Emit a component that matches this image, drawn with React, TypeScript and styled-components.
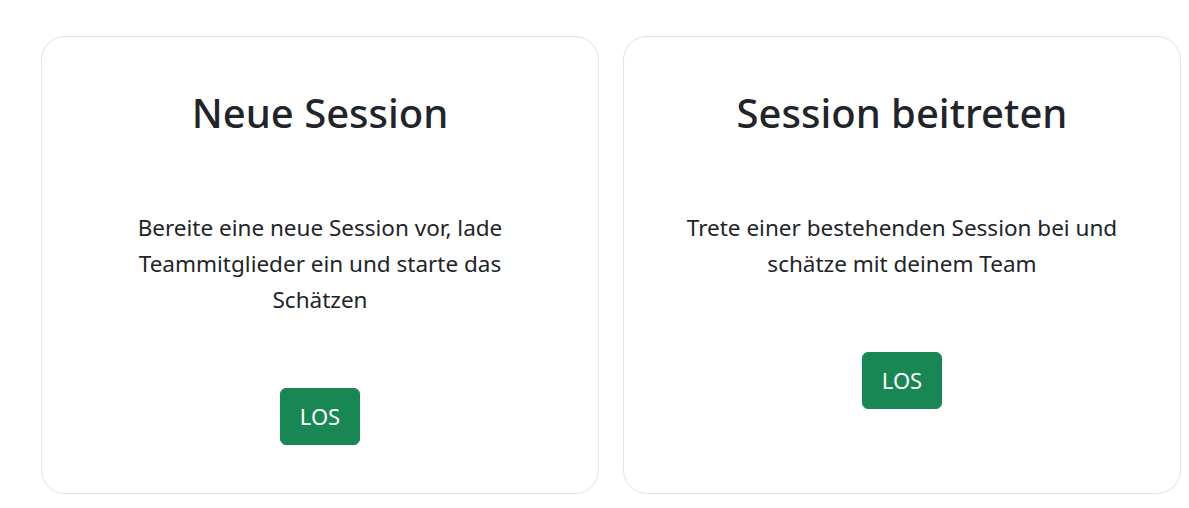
import styled, { createGlobalStyle } from 'styled-components';

const GlobalStyle = createGlobalStyle`
  body {
    margin: 0;
    background: #fff;
    color: #212529;
    font-family: "Noto Sans", "Open Sans", sans-serif;
  }
`;

const Page = styled.div`
  padding: 36px 8px 15px 41px;
`;

const Row = styled.div`
  display: grid;
  grid-template-columns: repeat(2, 558px);
  gap: 24px;
`;

const Card = styled.div`
  display: flex;
  flex-direction: column;
  align-items: center;
  text-align: center;
  padding: 52px 56px 48px;
  border: 1px solid #dee2e6;
  border-radius: 24px;
  background: #fff;
`;

const Title = styled.h1`
  margin: 0;
  font-size: 40px;
  font-weight: 500;
  line-height: 48px;
  color: #212529;
`;

const Text = styled.p`
  margin: 73px 0 0;
  font-size: 22.5px;
  line-height: 36px;
  color: #212529;
`;

const GoButton = styled.button`
  margin-top: 70px;
  padding: 11px 19px;
  font-family: inherit;
  font-size: 22px;
  line-height: 33px;
  color: #fff;
  background: #198754;
  border: 1px solid #198754;
  border-radius: 6px;
  cursor: pointer;
`;

const cards = [
  {
    title: 'Neue Session',
    text: 'Bereite eine neue Session vor, lade Teammitglieder ein und starte das Schätzen',
  },
  {
    title: 'Session beitreten',
    text: 'Trete einer bestehenden Session bei und schätze mit deinem Team',
  },
];

export default function App() {
  return (
    <>
      <GlobalStyle />
      <Page>
        <Row>
          {cards.map((card) => (
            <Card key={card.title}>
              <Title>{card.title}</Title>
              <Text>{card.text}</Text>
              <GoButton>LOS</GoButton>
            </Card>
          ))}
        </Row>
      </Page>
    </>
  );
}
